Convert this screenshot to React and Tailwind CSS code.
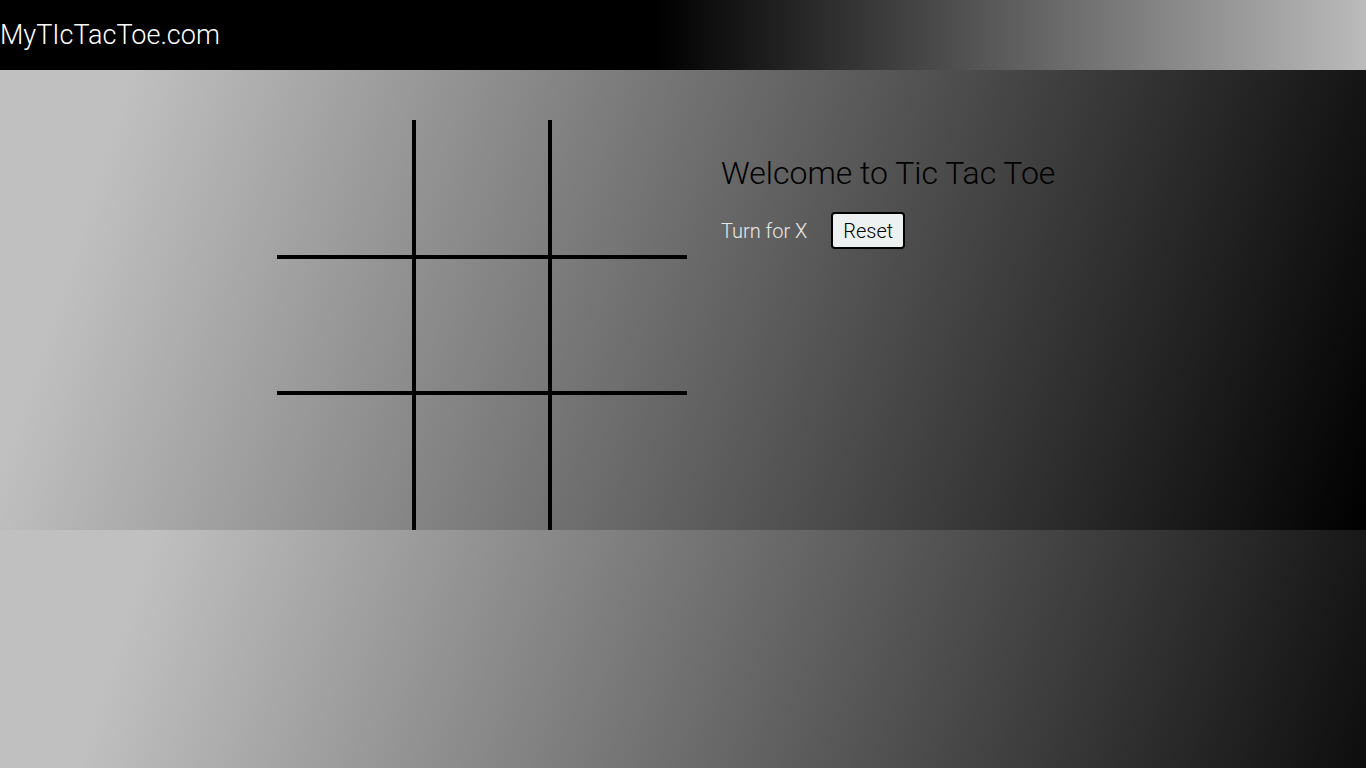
import { useState } from 'react';

const font = { fontFamily: 'Roboto, "Liberation Sans", sans-serif' };

export default function App() {
  const [cells, setCells] = useState(Array(9).fill(null));
  const [turn, setTurn] = useState('X');

  const play = (i) => {
    if (cells[i]) return;
    const next = cells.slice();
    next[i] = turn;
    setCells(next);
    setTurn(turn === 'X' ? 'O' : 'X');
  };

  const reset = () => {
    setCells(Array(9).fill(null));
    setTurn('X');
  };

  const cellClass = (i) => {
    const col = i % 3;
    const row = Math.floor(i / 3);
    let c = 'flex items-center justify-center text-6xl font-light text-black';
    if (col === 1) c += ' border-x-4 border-black';
    if (row === 1) c += ' border-y-4 border-black';
    return c;
  };

  return (
    <div
      className="min-h-screen bg-[linear-gradient(108deg,#c0c0c0_10%,#000)] bg-size-[100%_530px] bg-repeat"
      style={font}
    >
      {/* header */}
      <header className="h-[70px] flex items-center bg-[linear-gradient(to_right,#000_48%,#bbbbbb)]">
        <h1 className="text-[27px] font-light text-white leading-none">MyTIcTacToe.com</h1>
      </header>

      {/* game */}
      <main className="h-[460px] flex pl-[277px] pt-[50px] gap-[34px] overflow-hidden">
        <div className="grid grid-cols-[135px_140px_135px] grid-rows-[135px_140px_135px] h-[410px] shrink-0">
          {cells.map((v, i) => (
            <div key={i} className={cellClass(i)} onClick={() => play(i)}>
              {v}
            </div>
          ))}
        </div>

        <div className="pt-[34px]">
          <h2 className="text-[32px] font-light text-black leading-[38px]">Welcome to Tic Tac Toe</h2>
          <div className="flex items-center mt-[20px]">
            <span className="text-[20px] font-light text-[#e8e8e8]">Turn for {turn}</span>
            <button
              onClick={reset}
              className="ml-[24px] h-[37px] px-[10px] border-2 border-black rounded-[4px] bg-[#eef1f2] text-[20px] font-light text-black leading-none"
            >
              Reset
            </button>
          </div>
        </div>
      </main>
    </div>
  );
}
